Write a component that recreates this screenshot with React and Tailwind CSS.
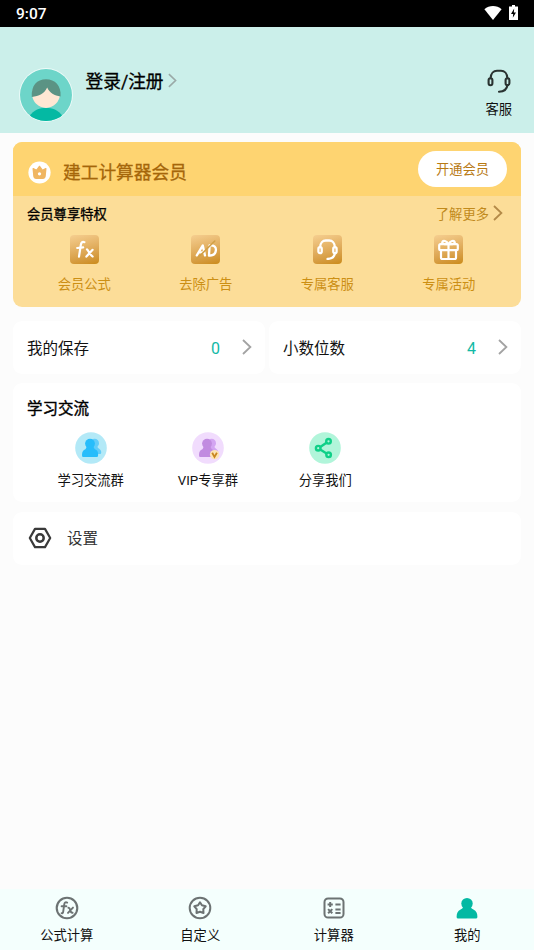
import React from 'react';

function Chevron({ className }) {
  return (
    <svg viewBox="0 0 10 16" className={className} fill="none" stroke="currentColor" strokeWidth="1.8">
      <path d="M1 1 L8.4 8 L1 15" />
    </svg>
  );
}

function Headset({ className, strokeWidth = 2 }) {
  return (
    <svg viewBox="0 0 24 24" className={className} fill="none" stroke="currentColor" strokeWidth={strokeWidth} strokeLinecap="round">
      <path d="M3.6 9.2 C3.8 4.4 6.6 1.7 10 1.7 L14 1.7 C17.4 1.7 20.2 4.4 20.4 9.2" />
      <rect x="1.6" y="9.2" width="3.8" height="7" rx="1.9" />
      <rect x="18.6" y="9.2" width="3.8" height="7" rx="1.9" />
      <path d="M20.4 16.2 C20 20.4 17.6 22.6 12 22.8" />
    </svg>
  );
}

function Avatar() {
  return (
    <svg viewBox="0 0 54 54" className="w-[54px] h-[54px] shrink-0">
      <defs>
        <clipPath id="avatarClip">
          <circle cx="27" cy="27" r="26" />
        </clipPath>
      </defs>
      <circle cx="27" cy="27" r="26.9" fill="#eefbf9" />
      <g clipPath="url(#avatarClip)">
        <rect width="54" height="54" fill="#6dd5c9" />
        <path d="M10 49 C15 41 21 40 27 40 C33 40 39 41 44 49 L44 54 L10 54 Z" fill="#04b9a3" />
        <circle cx="27" cy="26" r="13.9" fill="#ffe7d3" />
        <path d="M12.8 29 C12 17.5 18 11.2 27 11.2 C36 11.2 42.4 17.5 41.6 28.4 C35.5 28 30.5 25 28.2 19.6 C25.5 25.5 20 28.6 12.8 29 Z" fill="#5b9384" />
      </g>
    </svg>
  );
}

function Crown() {
  return (
    <svg viewBox="0 0 24 24" className="w-[23px] h-[23px]">
      <circle cx="12" cy="12" r="11.6" fill="#fff" />
      <path
        d="M5.4 8 L8.9 9.8 L12 5.6 L15.1 9.8 L18.6 8 L17.8 16.2 Q17.6 18 15.8 18 L8.2 18 Q6.4 18 6.2 16.2 Z"
        fill="#f0b662"
        stroke="#f0b662"
        strokeWidth="1.4"
        strokeLinejoin="round"
      />
      <circle cx="12" cy="13.4" r="1.7" fill="#fff" />
    </svg>
  );
}

function FxIcon() {
  return (
    <svg viewBox="0 0 29 29" className="w-[29px] h-[29px]" fill="none" stroke="#fff" strokeWidth="2.2" strokeLinecap="round" strokeLinejoin="round">
      <path d="M14.4 7.2 C12.2 6.4 11.2 7.6 10.8 10 L9 21.6" />
      <path d="M7.2 13 L13.2 12.4" />
      <path d="M17 14.4 C18.6 15.6 19.8 20 22.6 21.4 M22.6 14.8 L16.4 21.6" />
    </svg>
  );
}

function NoAdIcon() {
  return (
    <svg viewBox="0 0 29 29" className="w-[29px] h-[29px]" fill="none" stroke="#fff" strokeWidth="2.3" strokeLinecap="round" strokeLinejoin="round">
      <path d="M5.8 20.4 L11.8 10.4 L14 20.4" />
      <path d="M8.8 17.4 L13 17.4" />
      <path d="M18 20.6 L18.6 10.4 C23 10 25.2 12 24.9 15.2 C24.6 18.8 21.8 20.8 18 20.6" />
      <path d="M5.4 24.2 L23.8 6" stroke="#d2a046" strokeWidth="1.6" />
    </svg>
  );
}

function GiftIcon() {
  return (
    <svg viewBox="0 0 29 29" className="w-[29px] h-[29px]" fill="none" stroke="#fff" strokeWidth="2.2" strokeLinecap="round" strokeLinejoin="round">
      <rect x="5.2" y="9.2" width="18.6" height="6" rx="1.4" />
      <path d="M7 15.2 L7 22.4 Q7 24 8.6 24 L20.4 24 Q22 24 22 22.4 L22 15.2" />
      <path d="M14.5 9.4 L14.5 24" />
      <path d="M14.3 9.2 C9 9.4 7.8 8.2 8.2 7.2 C9 5 12.6 5.6 14.5 9.2 C16.4 5.6 20 5 20.8 7.2 C21.2 8.2 20 9.4 14.7 9.2" />
    </svg>
  );
}

function GroupIcon({ bg, back, front, vip }) {
  return (
    <svg viewBox="0 0 32 32" className="w-8 h-8">
      <circle cx="16" cy="16" r="15.8" fill={bg} />
      <g fill={back}>
        <circle cx="19.6" cy="11.2" r="4.4" />
        <path d="M17 13 L22.2 14 C22.6 15.4 23 16 24.4 17 C26.2 18.4 26.6 20.2 26 21.4 Q25.6 22 24.6 22 L17 22 Z" />
      </g>
      <g fill={front}>
        <circle cx="15" cy="11.6" r="4.9" />
        <path d="M11.6 14 L18.4 14 C18.6 16 19.4 17 21 17.8 C23 19 23.4 21.4 23 24.2 Q22.8 25 21.6 25 L8.2 25 Q7.2 25 7.1 24.2 C6.8 21.4 7.4 19 9.4 17.8 C11 17 11.4 16 11.6 14 Z" />
      </g>
      {vip && (
        <g>
          <circle cx="22.6" cy="22.6" r="4.7" fill="#fde3b4" />
          <path d="M20.2 20.8 L22.5 25 L24.9 20.8" fill="none" stroke="#c98621" strokeWidth="1.8" />
        </g>
      )}
    </svg>
  );
}

function ShareIcon() {
  return (
    <svg viewBox="0 0 32 32" className="w-8 h-8" fill="none" stroke="#0fd088" strokeWidth="2.4">
      <circle cx="16" cy="16" r="15.8" fill="#b1f5da" stroke="none" />
      <circle cx="9.2" cy="16.2" r="2.3" />
      <circle cx="19.5" cy="9.3" r="2.3" />
      <circle cx="19.6" cy="22.8" r="2.3" />
      <path d="M11.2 14.9 L17.5 10.7 M11.2 17.6 L17.6 21.5" />
    </svg>
  );
}

function SettingsIcon() {
  return (
    <svg viewBox="0 0 24 22" className="w-[24px] h-[22px]" fill="none" stroke="#3a3a3a" strokeWidth="2.2">
      <path d="M7 1.9 L17 1.9 L22.2 11 L17 20.1 L7 20.1 L1.8 11 Z" strokeLinejoin="round" />
      <circle cx="12" cy="11" r="3.7" strokeWidth="2.5" />
    </svg>
  );
}

function NavFx() {
  return (
    <svg viewBox="0 0 24 24" className="w-6 h-6" fill="none" stroke="#6c7373" strokeWidth="1.9" strokeLinecap="round" strokeLinejoin="round">
      <circle cx="12" cy="12" r="10.3" strokeWidth="2.1" />
      <path d="M12.2 6.6 C10.4 5.8 9.5 6.6 9.2 8.6 L8.2 15.6 C8 17 7.4 17.4 6.6 17.2" />
      <path d="M6.6 10.2 L11.4 10.2" />
      <path d="M13.4 11.8 C14.6 11.8 14.8 12.4 15.2 14 C15.6 15.8 16 17 17.6 16.8 M18 11.6 L13 16.9" />
    </svg>
  );
}

function NavStar() {
  return (
    <svg viewBox="0 0 24 24" className="w-6 h-6" fill="none" stroke="#6c7373" strokeWidth="2" strokeLinejoin="round">
      <circle cx="12" cy="12" r="10.3" />
      <path d="M12 6.3 L13.9 9.3 L17.7 10.3 L15.3 13.2 L15.5 17 L12 15.7 L8.5 17 L8.7 13.2 L6.3 10.3 L10.1 9.3 Z" />
    </svg>
  );
}

function NavCalc() {
  return (
    <svg viewBox="0 0 24 24" className="w-6 h-6" fill="none" stroke="#6c7373" strokeWidth="2">
      <rect x="2.5" y="2.5" width="19" height="19" rx="3.6" />
      <path d="M5.6 8.5 L10.8 8.5 M8.2 5.9 L8.2 11.1" />
      <path d="M13.4 8.6 L18.6 8.6 M13.4 13.4 L18.6 13.4 M13.4 17 L18.6 17" />
      <path d="M6.1 13.1 L10.3 17.3 M10.3 13.1 L6.1 17.3" />
    </svg>
  );
}

function NavUser() {
  return (
    <svg viewBox="0 0 24 24" className="w-6 h-6" fill="#04b9a3">
      <circle cx="12" cy="7.6" r="5.7" />
      <path d="M8.6 10 L15.4 10 C15.6 12 16.4 12.4 18.4 13.6 C21.4 15.2 22.4 17.6 22.4 21 Q22.4 22.6 20.8 22.6 L3.2 22.6 Q1.6 22.6 1.6 21 C1.6 17.6 2.6 15.2 5.6 13.6 C7.6 12.4 8.4 12 8.6 10 Z" />
    </svg>
  );
}

const privileges = [
  { label: '会员公式', icon: <FxIcon /> },
  { label: '去除广告', icon: <NoAdIcon /> },
  { label: '专属客服', icon: <Headset className="w-[21px] h-[21px] text-white" strokeWidth={2.6} /> },
  { label: '专属活动', icon: <GiftIcon /> },
];

const groups = [
  { label: '学习交流群', icon: <GroupIcon bg="#b3e9f7" back="#62cdfa" front="#27bdfb" /> },
  { label: 'VIP专享群', icon: <GroupIcon bg="#f1dcfd" back="#d3a5f2" front="#c18be0" vip /> },
  { label: '分享我们', icon: <ShareIcon /> },
];

const tabs = [
  { label: '公式计算', icon: <NavFx /> },
  { label: '自定义', icon: <NavStar /> },
  { label: '计算器', icon: <NavCalc /> },
  { label: '我的', icon: <NavUser /> },
];

function CountCard({ label, value }) {
  return (
    <div className="flex-1 h-[53px] bg-white rounded-[9px] flex items-center pl-[14px] pr-[13px]">
      <span className="text-[15.5px] pt-[4px]">{label}</span>
      <span className="ml-auto text-[16px] pt-[2px] text-[#12b9a6]">{value}</span>
      <Chevron className="w-[10px] h-[16px] ml-[22px] -mt-px text-[#a3a3a3]" />
    </div>
  );
}

export default function App() {
  return (
    <div className="w-full h-[950px] bg-[#fcfcfc] flex flex-col overflow-hidden text-[#111] leading-none whitespace-nowrap font-[Roboto,'Noto_Sans_CJK_SC',sans-serif]">
      {/* Status bar */}
      <div className="h-[27px] bg-black shrink-0 flex items-center justify-between pl-4 pr-[16px] text-white">
        <span className="text-[15.5px] pt-[2px] font-medium">9:07</span>
        <div className="flex items-center gap-[7px] -mt-[2px]">
          <svg viewBox="0 0 18 14" className="w-[18px] h-[14px]" fill="#fff">
            <path d="M9 14 L0.4 3.2 C5.2 -1 12.8 -1 17.6 3.2 Z" />
          </svg>
          <svg viewBox="0 0 9 15" className="w-[9px] h-[15px]">
            <path d="M3 0 L6 0 L6 1.4 L9 1.4 L9 15 L0 15 L0 1.4 L3 1.4 Z" fill="#fff" />
            <path d="M5.2 3.6 L2 9 L4.2 9 L3.8 12.8 L7 7.6 L4.8 7.6 Z" fill="#000" />
          </svg>
        </div>
      </div>

      {/* Profile header */}
      <div className="h-[106px] bg-[#cbefea] shrink-0 flex items-start pl-[19px] pr-[22px] pt-[41px]">
        <Avatar />
        <div className="flex items-center ml-[12.5px] mt-[4px] text-black">
          <span className="text-[17.7px] pt-[2px] [-webkit-text-stroke:0.3px]">登录/注册</span>
          <Chevron className="w-[9px] h-[15px] ml-[4px] -mt-[3px] text-[#9aa9a7]" />
        </div>
        <div className="ml-auto flex flex-col items-center">
          <Headset className="w-6 h-6 mt-px text-[#2a3331]" strokeWidth={2.1} />
          <span className="text-[13.3px] mt-[10px]">客服</span>
        </div>
      </div>

      <div className="px-[13px] pt-[9px] flex flex-col">
        {/* Membership card */}
        <div className="h-[165px] rounded-[9px] overflow-hidden bg-[#fcdd98]">
          <div className="h-[54px] bg-[#fed471] flex items-center pl-[15px] pr-[14px]">
            <div className="mt-[6px]">
              <Crown />
            </div>
            <span className="ml-[12px] mt-[10px] text-[17.7px] text-[#a5660a] [-webkit-text-stroke:0.3px]">建工计算器会员</span>
            <button className="ml-auto w-[89px] h-9 rounded-full bg-white pt-[2px] text-[13.3px] text-[#b87a14]">开通会员</button>
          </div>
          <div className="h-[36px] flex items-center pl-[14px] pr-[18px]">
            <span className="text-[13.3px] pt-[2px] text-black [-webkit-text-stroke:0.3px]">会员尊享特权</span>
            <span className="ml-auto text-[13.3px] pt-px text-[#c18a1c]">了解更多</span>
            <Chevron className="w-[10px] h-[16px] ml-[4px] -mt-[3px] text-[#b48a48]" />
          </div>
          <div className="grid grid-cols-4 pl-[11px] pr-[11px] pt-[3px]">
            {privileges.map((item) => (
              <div key={item.label} className="flex flex-col items-center -ml-px">
                <div className="w-[29px] h-[29px] rounded-[4px] bg-linear-165 from-[#f6cf90] to-[#cb8b15] flex items-center justify-center">
                  {item.icon}
                </div>
                <span className="mt-[14px] text-[13.3px] text-[#cc8f14]">{item.label}</span>
              </div>
            ))}
          </div>
        </div>

        <div className="flex gap-[4px] mt-[14px]">
          <CountCard label="我的保存" value="0" />
          <CountCard label="小数位数" value="4" />
        </div>

        {/* Study groups */}
        <div className="h-[119px] mt-[9px] rounded-[9px] bg-white pt-[19px]">
          <div className="pl-[14px] text-[15.5px] text-black [-webkit-text-stroke:0.4px]">学习交流</div>
          <div className="grid grid-cols-[repeat(3,117.3px)] pl-[19px] mt-[14px]">
            {groups.map((item) => (
              <div key={item.label} className="flex flex-col items-center">
                {item.icon}
                <span className="mt-[10px] text-[13.3px]">{item.label}</span>
              </div>
            ))}
          </div>
        </div>

        <div className="h-[53px] mt-[10px] rounded-[9px] bg-white flex items-center pl-[15px]">
          <div className="-mt-[2px]">
            <SettingsIcon />
          </div>
          <span className="ml-[15px] pt-[3px] text-[15.5px] text-[#333]">设置</span>
        </div>
      </div>

      {/* Bottom tabs */}
      <div className="mt-auto h-[61px] shrink-0 bg-[#f4fffd] grid grid-cols-4 pt-[7px]">
        {tabs.map((tab) => (
          <div key={tab.label} className="flex flex-col items-center">
            {tab.icon}
            <span className="mt-[9px] text-[13.3px]">{tab.label}</span>
          </div>
        ))}
      </div>
    </div>
  );
}
